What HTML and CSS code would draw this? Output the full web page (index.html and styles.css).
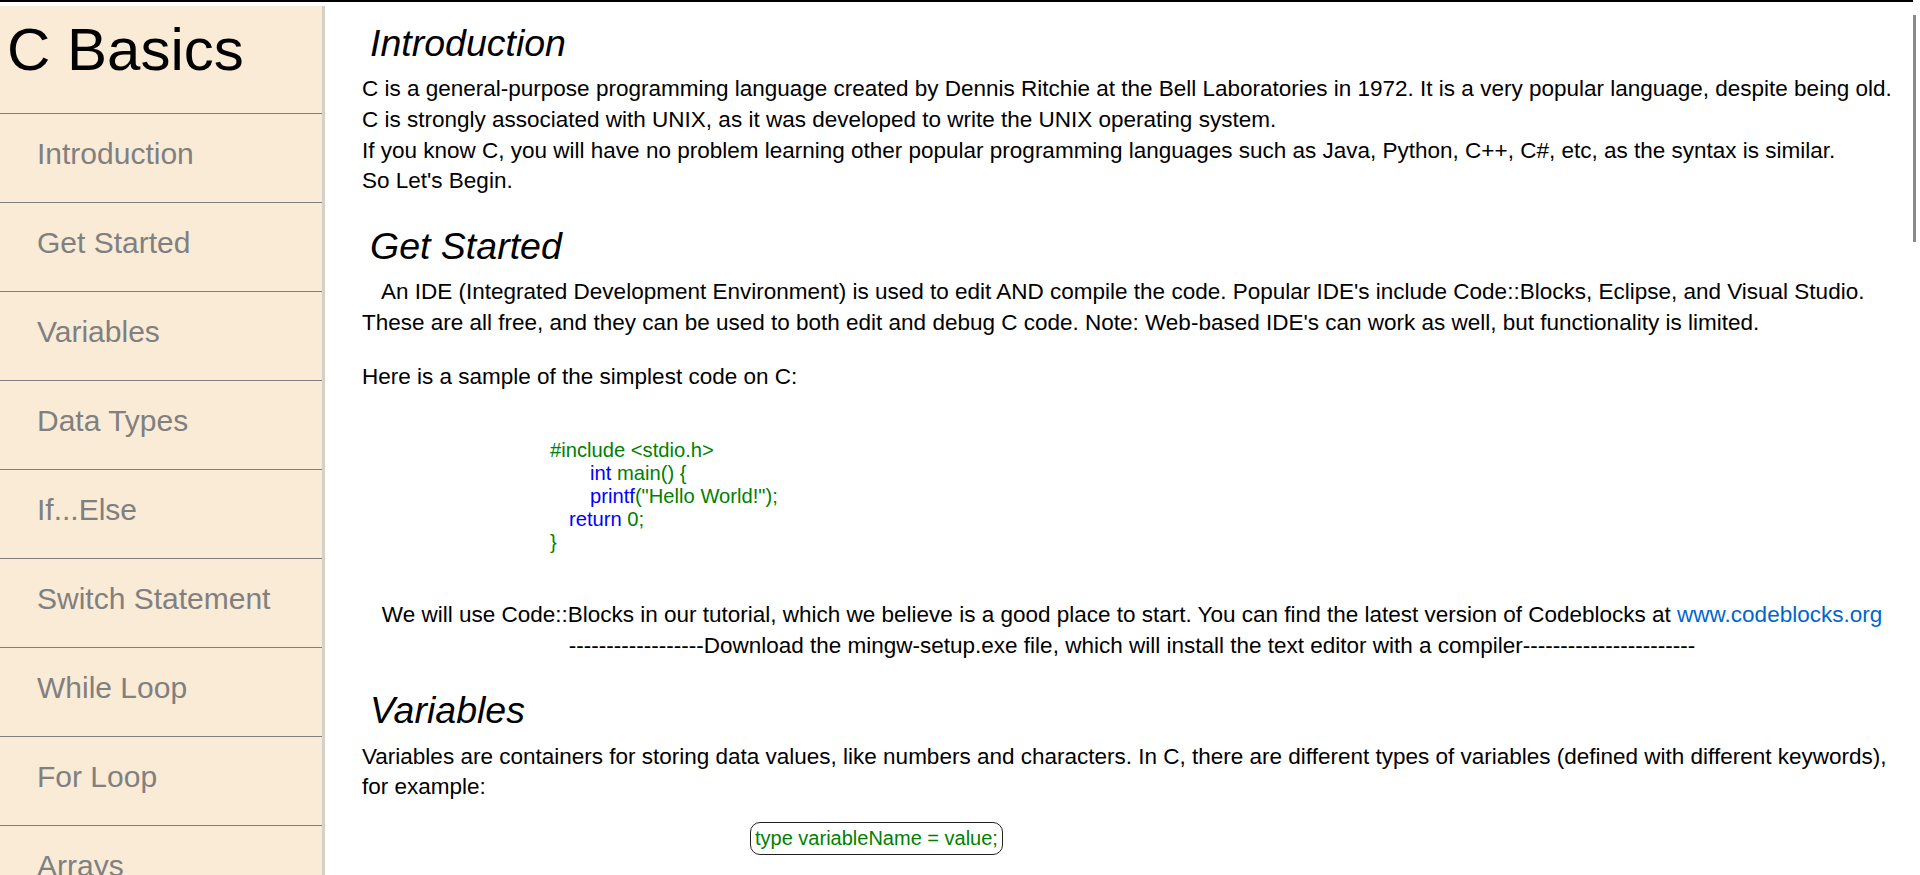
FILE: index.html
```html
<!DOCTYPE html>
<html lang="en">
<head>
<meta charset="utf-8">
<title>C Basics</title>
<link rel="stylesheet" href="styles.css">
</head>
<body>
<div class="topline"></div>
<div class="page">
  <nav class="sidebar">
    <div class="brand">C Basics</div>
    <a class="nav-item" href="#introduction">Introduction</a>
    <a class="nav-item" href="#get-started">Get Started</a>
    <a class="nav-item" href="#variables">Variables</a>
    <a class="nav-item" href="#data-types">Data Types</a>
    <a class="nav-item" href="#if-else">If...Else</a>
    <a class="nav-item" href="#switch">Switch Statement</a>
    <a class="nav-item" href="#while">While Loop</a>
    <a class="nav-item" href="#for">For Loop</a>
    <a class="nav-item" href="#arrays">Arrays</a>
    <a class="nav-item" href="#strings">Strings</a>
  </nav>
  <main class="content">
    <section class="section" id="introduction">
      <h2 class="heading">Introduction</h2>
      <p class="text">C is a general-purpose programming language created by Dennis Ritchie at the Bell Laboratories in 1972. It is a very popular language, despite being old.<br>C is strongly associated with UNIX, as it was developed to write the UNIX operating system.<br>If you know C, you will have no problem learning other popular programming languages such as Java, Python, C++, C#, etc, as the syntax is similar.<br>So Let's Begin.</p>
    </section>
    <section class="section" id="get-started">
      <h2 class="heading">Get Started</h2>
      <p class="text indented">An IDE (Integrated Development Environment) is used to edit AND compile the code. Popular IDE's include Code::Blocks, Eclipse, and Visual Studio. These are all free, and they can be used to both edit and debug C code. Note: Web-based IDE's can work as well, but functionality is limited.</p>
      <p class="text sample-intro">Here is a sample of the simplest code on C:</p>
      <div class="code">
        <div class="code-line">#include &lt;stdio.h&gt;</div>
        <div class="code-line indent-2"><span class="kw">int</span> main() {</div>
        <div class="code-line indent-2"><span class="kw">printf</span>("Hello World!");</div>
        <div class="code-line indent-1"><span class="kw">return</span> 0;</div>
        <div class="code-line">}</div>
      </div>
      <p class="text centered">We will use Code::Blocks in our tutorial, which we believe is a good place to start. You can find the latest version of Codeblocks at <a class="link" href="#codeblocks">www.codeblocks.org</a><br>------------------Download the mingw-setup.exe file, which will install the text editor with a compiler-----------------------</p>
    </section>
    <section class="section" id="variables">
      <h2 class="heading">Variables</h2>
      <p class="text">Variables are containers for storing data values, like numbers and characters. In C, there are different types of variables (defined with different keywords), for example:</p>
      <div class="syntax">type variableName = value;</div>
    </section>
  </main>
</div>
<div class="scroll-thumb"></div>
</body>
</html>
```

FILE: styles.css
```css
html, body {
  margin: 0;
  padding: 0;
  height: 100%;
  overflow: hidden;
  background: #ffffff;
}

body {
  font-family: "Liberation Sans", Arial, sans-serif;
  color: #000000;
}

.topline {
  height: 2px;
  width: calc(100% - 7px);
  background: #000000;
}

.page {
  display: flex;
  margin-top: 4px;
  height: calc(100vh - 6px);
  overflow: hidden;
}

.sidebar {
  flex: none;
  width: 322px;
  background: #faebd7;
  border-right: 3px solid #d6d0c9;
  display: flex;
  flex-direction: column;
  overflow: hidden;
}

.brand {
  flex: none;
  height: 107px;
  box-sizing: border-box;
  padding: 9px 0 0 7px;
  font-size: 60px;
  line-height: normal;
  color: #000000;
}

.nav-item {
  flex: none;
  display: block;
  height: 89px;
  box-sizing: border-box;
  border-top: 1px solid #808080;
  padding: 23px 0 0 37px;
  font-size: 30px;
  line-height: normal;
  color: #808080;
  text-decoration: none;
}

.content {
  flex: 1;
  min-width: 0;
  padding: 17px 18px 0 37px;
  overflow: hidden;
}

.section {
  margin: 0 0 29px 0;
}

.heading {
  margin: 0 0 10px 0;
  padding-left: 8px;
  font-size: 37.5px;
  line-height: 41.4px;
  font-style: italic;
  font-weight: normal;
}

.text {
  margin: 0;
  font-size: 22.5px;
  line-height: 30.6px;
}

.indented {
  text-indent: 19px;
}

.sample-intro {
  margin-top: 24px;
}

.code {
  margin: 46px 0 46px 188px;
  font-size: 20.2px;
  line-height: 23px;
  color: #008000;
}

.indent-1 {
  padding-left: 19px;
}

.indent-2 {
  padding-left: 40px;
}

.kw {
  color: #0000ff;
}

.centered {
  text-align: center;
}

.link {
  color: #0066cc;
  text-decoration: none;
}

.syntax {
  display: inline-block;
  margin: 19px 0 0 388px;
  padding: 4px 4px;
  border: 1px solid #222222;
  border-radius: 10px;
  font-size: 20px;
  line-height: 23px;
  color: #008000;
}

.scroll-thumb {
  position: absolute;
  left: 1913px;
  top: 15px;
  width: 3px;
  height: 227px;
  background: #8a8a8a;
}
```
